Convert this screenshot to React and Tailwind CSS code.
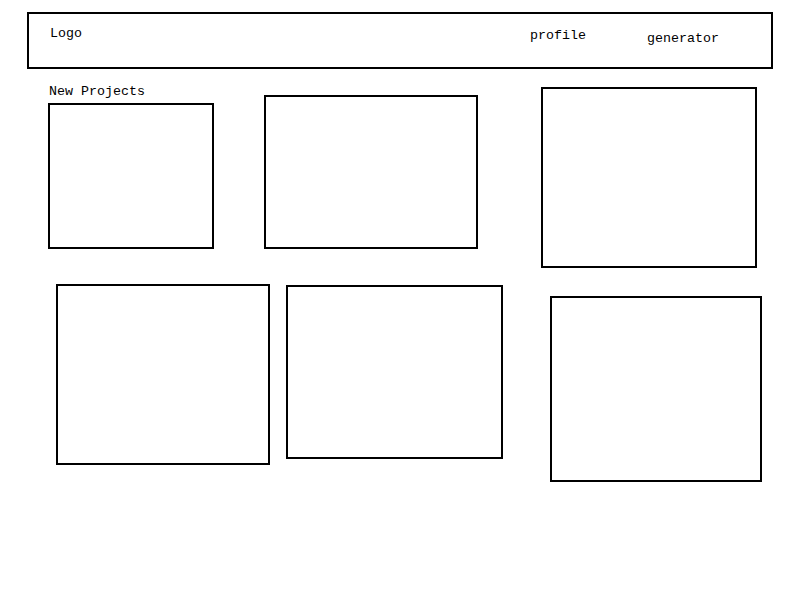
function Box({ className }) {
    return <div className={`border-2 border-black bg-white shrink-0 ${className}`} />;
}

function App() {
    return (
        <div className="w-[800px] h-[600px] bg-white text-black font-['Liberation_Mono',monospace] text-[13.33px] leading-[16px] overflow-hidden">
            <header className="mx-[27px] mt-[12px] h-[57px] border-2 border-black flex items-start">
                <span className="ml-[21px] mt-[12px]">Logo</span>
                <span className="ml-auto mt-[14px]">profile</span>
                <span className="ml-[61px] mr-[52px] mt-[17px]">generator</span>
            </header>

            <div className="flex items-start mt-[15px] pl-[48px]">
                <div className="flex flex-col">
                    <span className="h-[16px] pl-[1px]">New Projects</span>
                    <Box className="mt-[3px] w-[166px] h-[146px]" />
                </div>
                <Box className="ml-[50px] mt-[11px] w-[214px] h-[154px]" />
                <Box className="ml-[63px] mt-[3px] w-[216px] h-[181px]" />
            </div>

            <div className="flex items-start mt-[16px] pl-[56px]">
                <Box className="w-[214px] h-[181px]" />
                <Box className="ml-[16px] mt-[1px] w-[217px] h-[174px]" />
                <Box className="ml-[47px] mt-[12px] w-[212px] h-[186px]" />
            </div>
        </div>
    );
}

export default App;
